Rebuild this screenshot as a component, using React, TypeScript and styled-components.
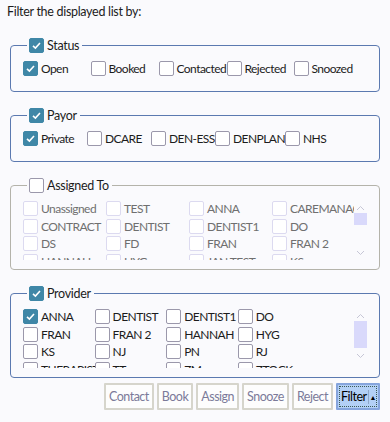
import React from "react";
import styled, { createGlobalStyle, css } from "styled-components";

const GlobalStyle = createGlobalStyle`
  html, body {
    margin: 0;
    padding: 0;
    background: #fafafd;
  }
  body {
    font-family: Lato, "Noto Sans", sans-serif;
    font-size: 12px;
    letter-spacing: -0.55px;
    color: #1c1c1c;
  }
`;

const Page = styled.div`
  width: 390px;
  height: 422px;
  padding: 4px 0 0 7px;
  box-sizing: border-box;
  overflow: hidden;
`;

const Title = styled.div`
  font-size: 12.5px;
  letter-spacing: -0.3px;
  line-height: 16px;
  margin-bottom: 18px;
`;

const Group = styled.fieldset<{ $tone: "blue" | "grey"; $list?: boolean }>`
  width: 370px;
  box-sizing: border-box;
  margin: 0 0 16px 3px;
  padding: ${(p) => (p.$list ? "6px 0 9px 12px" : "8px 0 15px 12px")};
  border: 1px solid ${(p) => (p.$tone === "blue" ? "#5b79b0" : "#b4b3aa")};
  border-radius: 4px;
  min-width: 0;
`;

const Legend = styled.legend`
  display: flex;
  align-items: center;
  gap: 3px;
  padding: 0 3px 0 2px;
  margin-left: 4px;
  line-height: 15px;
  font-size: 12.5px;
  letter-spacing: -0.3px;
`;

const Box = styled.span<{ $checked?: boolean; $disabled?: boolean }>`
  flex: none;
  width: 15px;
  height: 15px;
  box-sizing: border-box;
  border-radius: 2px;
  display: inline-flex;
  align-items: center;
  justify-content: center;
  background: #fff;
  border: 1px solid #9b98ab;
  ${(p) =>
    p.$checked &&
    css`
      background: #3f87a7;
      border-color: #3f87a7;
    `}
  ${(p) =>
    p.$disabled &&
    css`
      border-color: #dcdaf0;
    `}
`;

const Check = ({ checked, disabled }: { checked?: boolean; disabled?: boolean }) => (
  <Box $checked={checked} $disabled={disabled}>
    {checked && (
      <svg width="11" height="11" viewBox="0 0 11 11">
        <path d="M2 5.8 L4.4 8 L9 3" fill="none" stroke="#fff" strokeWidth="1.6" />
      </svg>
    )}
  </Box>
);

const Row = styled.div<{ $cols: string }>`
  display: grid;
  grid-template-columns: ${(p) => p.$cols};
`;

const Item = styled.label<{ $disabled?: boolean; $h?: number }>`
  display: flex;
  align-items: center;
  gap: 3px;
  height: ${(p) => p.$h ?? 15}px;
  white-space: nowrap;
  color: ${(p) => (p.$disabled ? "#6f6f6f" : "#1c1c1c")};
`;

const ScrollArea = styled.div`
  display: flex;
  height: 61px;
  overflow: hidden;
  margin-right: 12px;
`;

const ScrollBody = styled.div`
  flex: 1;
  padding-top: 1px;
  overflow: hidden;
`;

const Track = styled.div`
  width: 13px;
  display: flex;
  flex-direction: column;
  align-items: center;
`;

const Thumb = styled.div<{ $top: number; $h: number }>`
  width: 13px;
  height: ${(p) => p.$h}px;
  margin-top: ${(p) => p.$top}px;
  background: #d9d9fb;
`;

const Arrow = styled.svg`
  display: block;
`;

const Scrollbar = ({ top, thumb, h }: { top: number; thumb: number; h: number }) => (
  <Track>
    <Arrow width="9" height="6" viewBox="0 0 9 6" style={{ marginTop: 6 }}>
      <path d="M1 5 L4.5 1.5 L8 5" fill="none" stroke="#c6c6d6" strokeWidth="1" />
    </Arrow>
    <Thumb $top={top} $h={thumb} />
    <Arrow width="9" height="6" viewBox="0 0 9 6" style={{ marginTop: h }}>
      <path d="M1 1 L4.5 4.5 L8 1" fill="none" stroke="#c6c6d6" strokeWidth="1" />
    </Arrow>
  </Track>
);

const Buttons = styled.div`
  display: flex;
  justify-content: flex-end;
  gap: 3px;
  width: 373px;
  margin-top: -11px;
`;

const Btn = styled.button<{ $active?: boolean }>`
  height: 27px;
  padding: 0 3px;
  font-family: inherit;
  font-size: 12.5px;
  letter-spacing: -0.5px;
  border: 2px solid #d6d5cc;
  border-radius: 1px;
  background: #fdfdfd;
  color: #7b7a99;
  ${(p) =>
    p.$active &&
    css`
      display: flex;
      align-items: center;
      gap: 1px;
      padding: 0 2px 0 3px;
      background: #b3d0f6;
      border-color: #86a5dd;
      color: #000;
      outline: 1px dotted #3b5a56;
      outline-offset: -4px;
    `}
`;

const Caret = styled.span`
  border-left: 1px solid #8fa7c8;
  padding-left: 1px;
  font-size: 7px;
  line-height: 14px;
`;

const status = ["Open", "Booked", "Contacted", "Rejected", "Snoozed"];
const payor = ["Private", "DCARE", "DEN-ESS", "DENPLAN", "NHS"];
const assigned = [
  "Unassigned", "TEST", "ANNA", "CAREMANAGE",
  "CONTRACT", "DENTIST", "DENTIST1", "DO",
  "DS", "FD", "FRAN", "FRAN 2",
  "HANNAH", "HYG", "JAN TEST", "KS",
];
const providers = [
  "ANNA", "DENTIST", "DENTIST1", "DO",
  "FRAN", "FRAN 2", "HANNAH", "HYG",
  "KS", "NJ", "PN", "RJ",
  "THERAPIST", "TT", "ZM", "ZTOCK",
];

export default function App() {
  return (
    <Page>
      <GlobalStyle />
      <Title>Filter the displayed list by:</Title>

      <Group $tone="blue">
        <Legend>
          <Check checked />
          Status
        </Legend>
        <Row $cols="67.5px 68px 68px 67px 60px">
          {status.map((s, i) => (
            <Item key={s}>
              <Check checked={i === 0} />
              {s}
            </Item>
          ))}
        </Row>
      </Group>

      <Group $tone="blue">
        <Legend>
          <Check checked />
          Payor
        </Legend>
        <Row $cols="64px 64px 64px 70px 40px">
          {payor.map((s, i) => (
            <Item key={s}>
              <Check checked={i === 0} />
              {s}
            </Item>
          ))}
        </Row>
      </Group>

      <Group $tone="grey" $list>
        <Legend>
          <Check />
          Assigned To
        </Legend>
        <ScrollArea>
          <ScrollBody>
            <Row $cols="83px 83px 83px 83px">
              {assigned.map((s) => (
                <Item key={s} $disabled $h={17.6}>
                  <Check disabled />
                  {s}
                </Item>
              ))}
            </Row>
          </ScrollBody>
          <Scrollbar top={2} thumb={12} h={25} />
        </ScrollArea>
      </Group>

      <Group $tone="blue" $list>
        <Legend>
          <Check checked />
          Provider
        </Legend>
        <ScrollArea>
          <ScrollBody>
            <Row $cols="71.6px 71.6px 71.6px 71.6px">
              {providers.map((s, i) => (
                <Item key={s} $h={17.6}>
                  <Check checked={i === 0} />
                  {s}
                </Item>
              ))}
            </Row>
          </ScrollBody>
          <Scrollbar top={2} thumb={27} h={5} />
        </ScrollArea>
      </Group>

      <Buttons>
        <Btn>Contact</Btn>
        <Btn>Book</Btn>
        <Btn>Assign</Btn>
        <Btn>Snooze</Btn>
        <Btn>Reject</Btn>
        <Btn $active>
          Filter
          <Caret>▲</Caret>
        </Btn>
      </Buttons>
    </Page>
  );
}
